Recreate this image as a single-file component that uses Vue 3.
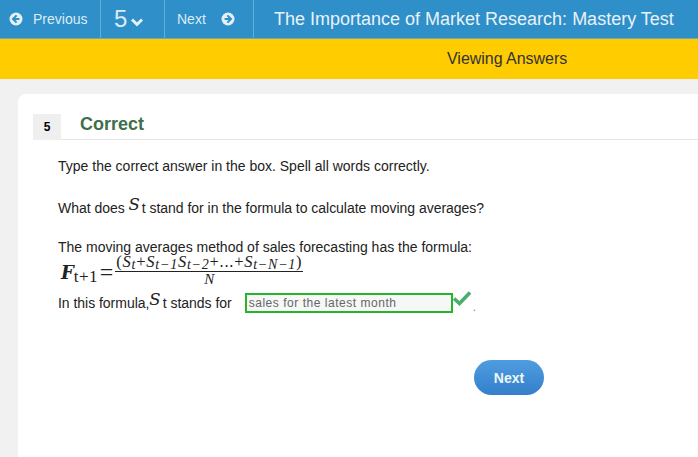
<template>
  <div class="page">
    <header class="topbar">
      <button class="nav-btn prev">
        <svg class="arrow" viewBox="0 0 14 14" width="14" height="14">
          <circle cx="7" cy="7" r="6.5" fill="#e4f0f8" />
          <path d="M7.6 3.4 4 7l3.6 3.6M4.4 7h6" fill="none" stroke="#2f8fc8" stroke-width="2" />
        </svg>
        <span>Previous</span>
      </button>
      <button class="nav-btn number">
        <span class="num">5</span>
        <svg viewBox="0 0 14 10" width="14" height="10">
          <path d="M2 2.5 7 7.5 12 2.5" fill="none" stroke="#e4f0f8" stroke-width="3" />
        </svg>
      </button>
      <button class="nav-btn next">
        <span>Next</span>
        <svg class="arrow" viewBox="0 0 14 14" width="14" height="14">
          <circle cx="7" cy="7" r="6.5" fill="#e4f0f8" />
          <path d="M6.4 3.4 10 7l-3.6 3.6M9.6 7h-6" fill="none" stroke="#2f8fc8" stroke-width="2" />
        </svg>
      </button>
      <h1 class="title">The Importance of Market Research: Mastery Test</h1>
    </header>
    <div class="status">Viewing Answers</div>

    <main class="card">
      <div class="result">
        <span class="badge">5</span>
        <h2>Correct</h2>
      </div>
      <div class="question">
        <p class="line first">Type the correct answer in the box. Spell all words correctly.</p>
        <p class="line second">
          What does <span class="sym"><i>S</i><small>t</small></span> stand for in the formula to calculate moving averages?
        </p>
        <p class="line third">The moving averages method of sales forecasting has the formula:</p>
        <div class="formula">
          <span class="lhs"><i>F</i><sub>t+1</sub></span>
          <span class="eq">=</span>
          <span class="frac">
            <span class="numer">(<i>S</i><sub>t</sub>+<i>S</i><sub>t−1</sub><i>S</i><sub>t−2</sub>+...+<i>S</i><sub>t−N−1</sub>)</span>
            <span class="denom">N</span>
          </span>
        </div>
        <div class="answer-line">
          <span>In this formula,</span><span class="sym"><i>S</i><small>t</small></span>
          <span class="stands">stands for</span>
          <span class="answer">sales for the latest month</span>
          <svg class="check" viewBox="0 0 20 16" width="20" height="16">
            <path d="M2 8.5 7.5 13.5 18 2.5" fill="none" stroke="#4cae6e" stroke-width="3.6" />
          </svg>
          <span class="dot">.</span>
        </div>
      </div>
      <div class="actions">
        <button class="next-btn">Next</button>
      </div>
    </main>
  </div>
</template>

<script setup>
</script>

<style>
html, body {
  margin: 0;
  background: #f1f1f1;
  overflow: hidden;
}
</style>

<style scoped>
* {
  box-sizing: border-box;
}
.page {
  width: 698px;
  height: 457px;
  overflow: hidden;
  background: #f1f1f1;
  font-family: "Liberation Sans", Arial, sans-serif;
  color: #222;
}
.topbar {
  display: flex;
  align-items: stretch;
  height: 39px;
  background: #2f8fc8;
  border-bottom: 1px solid #6fa7b4;
}
.nav-btn {
  display: flex;
  align-items: center;
  border: 0;
  border-right: 1px solid #66add8;
  background: none;
  padding: 0;
  color: #dcebf5;
  font: 14px "Liberation Sans", Arial, sans-serif;
}
.prev {
  width: 101px;
  padding-left: 9px;
  gap: 10px;
}
.number {
  width: 64px;
  padding-left: 13px;
  gap: 3px;
}
.number svg {
  margin-top: 6px;
}
.num {
  font-size: 24px;
}
.next {
  width: 89px;
  padding-left: 12px;
  gap: 15px;
}
.title {
  margin: 0 0 0 20px;
  font-size: 18px;
  font-weight: 400;
  line-height: 38px;
  color: #e8f2f9;
  white-space: nowrap;
}
.status {
  height: 40px;
  background: #ffcc00;
  padding-left: 447px;
  font-size: 16px;
  letter-spacing: -0.03px;
  line-height: 39px;
  color: #333;
}
.card {
  margin: 15px 0 0 18px;
  height: 400px;
  padding-top: 20px;
  background: #fff;
  border-radius: 8px 0 0 0;
}
.result {
  display: flex;
  align-items: stretch;
  margin-left: 15px;
  height: 26px;
  border-bottom: 1px solid #e4e4e4;
}
.badge {
  width: 28px;
  height: 26px;
  background: #efefef;
  font-size: 12px;
  font-weight: 700;
  line-height: 26px;
  text-align: center;
  color: #000;
}
.result h2 {
  margin: -3px 0 0 19px;
  font-size: 18px;
  line-height: 26px;
  color: #3e6e4a;
}
.question {
  padding-left: 40px;
  font-size: 14px;
  color: #222;
}
.line {
  margin: 0;
  line-height: 16px;
}
.first {
  padding-top: 18px;
}
.second {
  margin-top: 26px;
  letter-spacing: -0.03px;
}
.third {
  margin-top: 23px;
}
.sym {
  font-family: "Liberation Serif", serif;
  line-height: 0;
  white-space: nowrap;
}
.sym i {
  position: relative;
  top: -3px;
  font-family: "DejaVu Serif", serif;
  font-size: 16.5px;
  font-weight: 400;
}
.sym small {
  font-family: "Liberation Sans", sans-serif;
  font-size: 14px;
  margin-left: 2px;
}
.formula {
  display: flex;
  align-items: center;
  height: 35px;
  font-family: "Liberation Serif", serif;
}
.lhs {
  white-space: nowrap;
}
.lhs i {
  font-family: "DejaVu Serif", serif;
  font-size: 18px;
  font-weight: 700;
  margin-left: 3px;
}
.lhs sub {
  font-size: 17px;
  letter-spacing: 0.4px;
  vertical-align: -3px;
  line-height: 0;
}
.eq {
  margin: 0 2px 0 2px;
  font-size: 24px;
}
.frac {
  display: flex;
  flex-direction: column;
  align-items: center;
  margin-top: -5px;
}
.numer {
  padding: 0 1px;
  border-bottom: 1px solid #222;
  font-size: 16.5px;
  line-height: 18px;
  letter-spacing: 0.75px;
  white-space: nowrap;
}
.numer sub {
  font-size: 14px;
  font-style: italic;
  vertical-align: -2px;
  line-height: 0;
}
.denom {
  font-size: 15px;
  font-style: italic;
  line-height: 15px;
}
.answer-line {
  display: flex;
  align-items: center;
  height: 26px;
  letter-spacing: -0.03px;
}
.stands {
  margin-left: 4px;
}
.answer {
  width: 208px;
  height: 20px;
  margin-left: 13px;
  padding-left: 2px;
  border: 2px solid #25b52a;
  background: #f7f7f7;
  color: #666;
  font-size: 12px;
  letter-spacing: 0.53px;
  line-height: 17px;
}
.check {
  align-self: flex-start;
  margin: 0 0 0 -1px;
}
.dot {
  margin-left: 1px;
  margin-top: 7px;
  font-size: 12px;
  color: #888;
}
.actions {
  padding: 44px 0 0 456px;
}
.next-btn {
  width: 70px;
  height: 35px;
  border: 0;
  border-radius: 18px;
  background: linear-gradient(#4f9de0, #337fcb);
  color: #eef5fb;
  font: 700 14px "Liberation Sans", Arial, sans-serif;
}
</style>
